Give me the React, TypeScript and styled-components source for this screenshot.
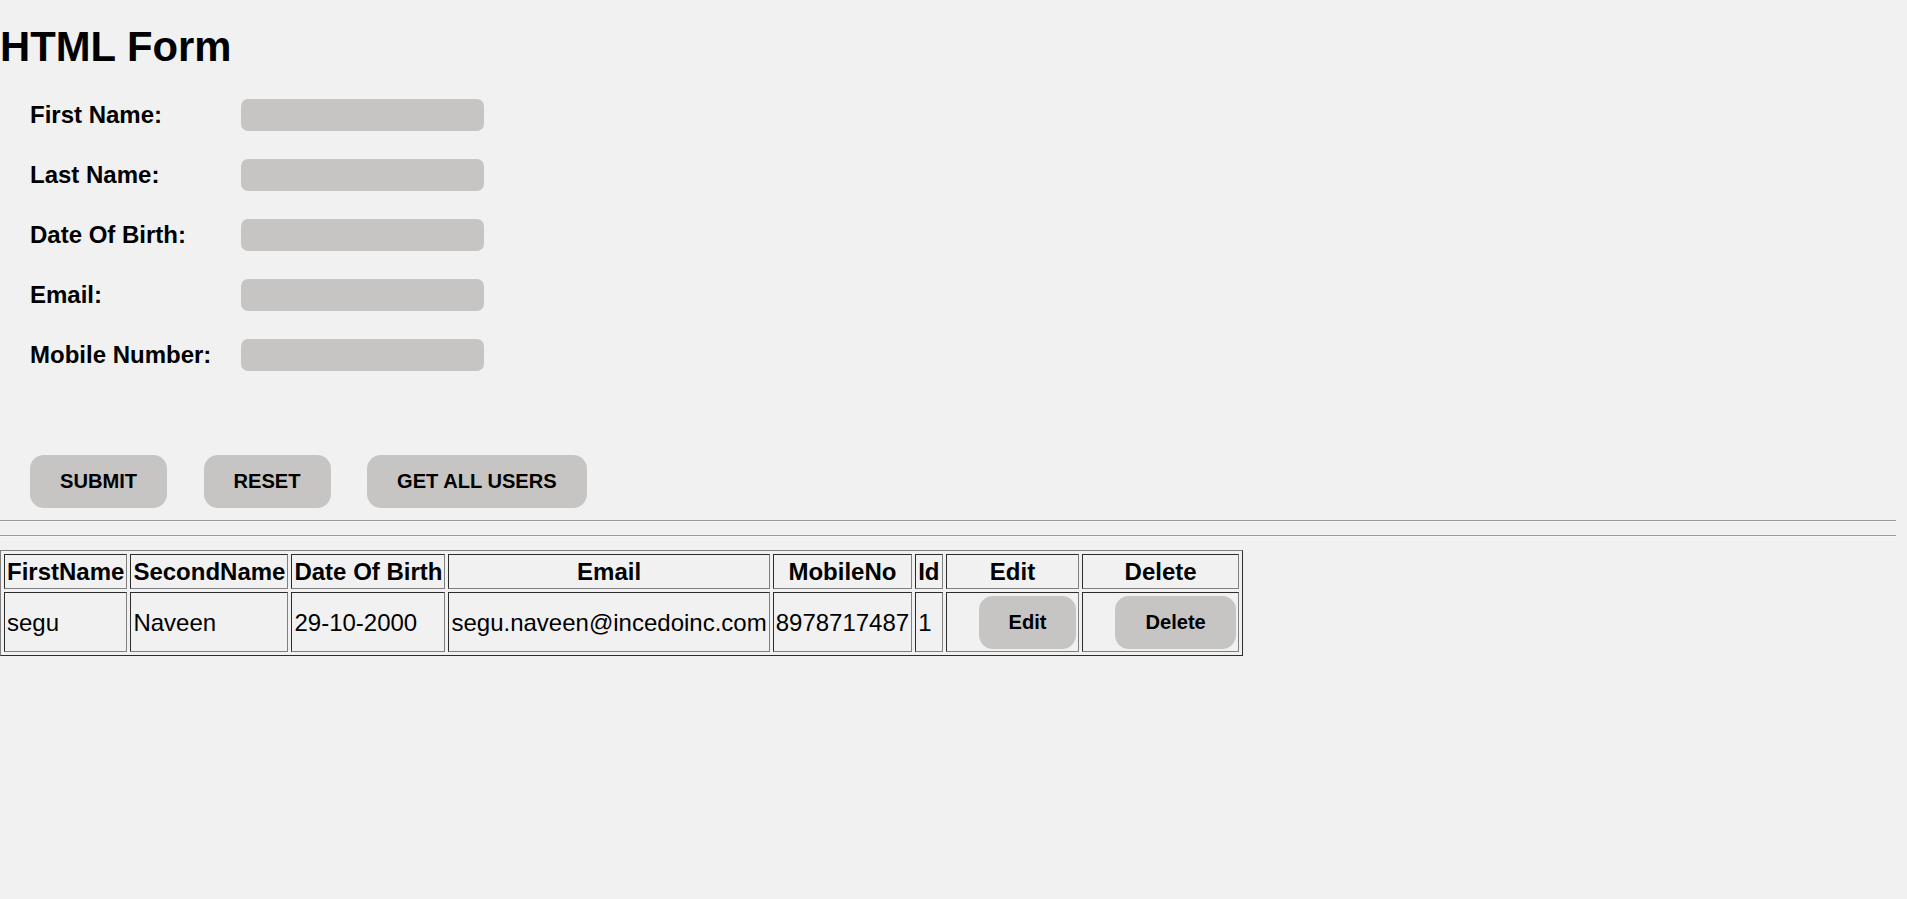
import React from "react";
import styled, { createGlobalStyle } from "styled-components";

const GlobalStyle = createGlobalStyle`
  html, body {
    margin: 0;
    padding: 0;
    background: #f1f1f1;
  }
  body {
    font-family: "Liberation Sans", Arial, sans-serif;
    color: #000;
  }
`;

const Page = styled.div`
  min-height: 899px;
`;

const Title = styled.h1`
  margin: 24px 0 29px;
  font-size: 41.8px;
  line-height: 46px;
  font-weight: 700;
`;

const Form = styled.form`
  display: flex;
  flex-direction: column;
  gap: 28px;
  padding-left: 30px;
`;

const Row = styled.div`
  display: grid;
  grid-template-columns: 211px 243px;
  align-items: center;
  height: 32px;
`;

const Label = styled.label`
  font-size: 24px;
  font-weight: 700;
  line-height: 27px;
  padding-bottom: 2px;
`;

const Input = styled.input`
  width: 243px;
  height: 32px;
  box-sizing: border-box;
  border: none;
  border-radius: 7px;
  background: #c6c5c3;
  outline: none;
`;

const ButtonRow = styled.div`
  display: flex;
  gap: 6.5px;
  margin-top: 84px;
`;

const Button = styled.button`
  margin: 0 0 0 30px;
  height: 53px;
  padding: 0 30px;
  border: none;
  border-radius: 14px;
  background: #c6c5c3;
  color: #000;
  font-family: "Liberation Sans", Arial, sans-serif;
  font-size: 20.1px;
  font-weight: 700;
  vertical-align: middle;
  cursor: pointer;
`;

const Divider = styled.hr<{ $top: number }>`
  margin: ${(p) => p.$top}px 11px 0 0;
  height: 0;
  border: none;
  border-top: 1px solid #9a9a9a;
  border-bottom: 1px solid #f8f8f8;
`;

const Table = styled.table`
  margin-top: 13px;
  border-collapse: separate;
  border-spacing: 3px;
  border: 1px outset gray;
  font-size: 24px;
`;

const Th = styled.th`
  border: 1px inset gray;
  padding: 2px;
  line-height: 29px;
  font-weight: 700;
  text-align: center;
`;

const Td = styled.td`
  border: 1px inset gray;
  padding: 2.5px 2px;
  line-height: 27px;
  text-align: left;
  vertical-align: middle;
`;

const fields = [
  { id: "firstName", label: "First Name:" },
  { id: "lastName", label: "Last Name:" },
  { id: "dob", label: "Date Of Birth:" },
  { id: "email", label: "Email:" },
  { id: "mobile", label: "Mobile Number:" },
];

const headers = ["FirstName", "SecondName", "Date Of Birth", "Email", "MobileNo", "Id", "Edit", "Delete"];

const users = [
  {
    first: "segu",
    second: "Naveen",
    dob: "29-10-2000",
    email: "segu.naveen@incedoinc.com",
    mobile: "8978717487",
    id: 1,
  },
];

export default function App() {
  return (
    <Page>
      <GlobalStyle />
      <Title>HTML Form</Title>
      <Form onSubmit={(e) => e.preventDefault()}>
        {fields.map((f) => (
          <Row key={f.id}>
            <Label htmlFor={f.id}>{f.label}</Label>
            <Input id={f.id} type="text" />
          </Row>
        ))}
      </Form>
      <ButtonRow>
        <Button type="button">SUBMIT</Button>
        <Button type="button">RESET</Button>
        <Button type="button">GET ALL USERS</Button>
      </ButtonRow>
      <Divider $top={12} />
      <Divider $top={13} />
      <Table>
        <thead>
          <tr>
            {headers.map((h) => (
              <Th key={h}>{h}</Th>
            ))}
          </tr>
        </thead>
        <tbody>
          {users.map((u) => (
            <tr key={u.id}>
              <Td>{u.first}</Td>
              <Td>{u.second}</Td>
              <Td>{u.dob}</Td>
              <Td>{u.email}</Td>
              <Td>{u.mobile}</Td>
              <Td>{u.id}</Td>
              <Td>
                <Button type="button">Edit</Button>
              </Td>
              <Td>
                <Button type="button">Delete</Button>
              </Td>
            </tr>
          ))}
        </tbody>
      </Table>
    </Page>
  );
}
